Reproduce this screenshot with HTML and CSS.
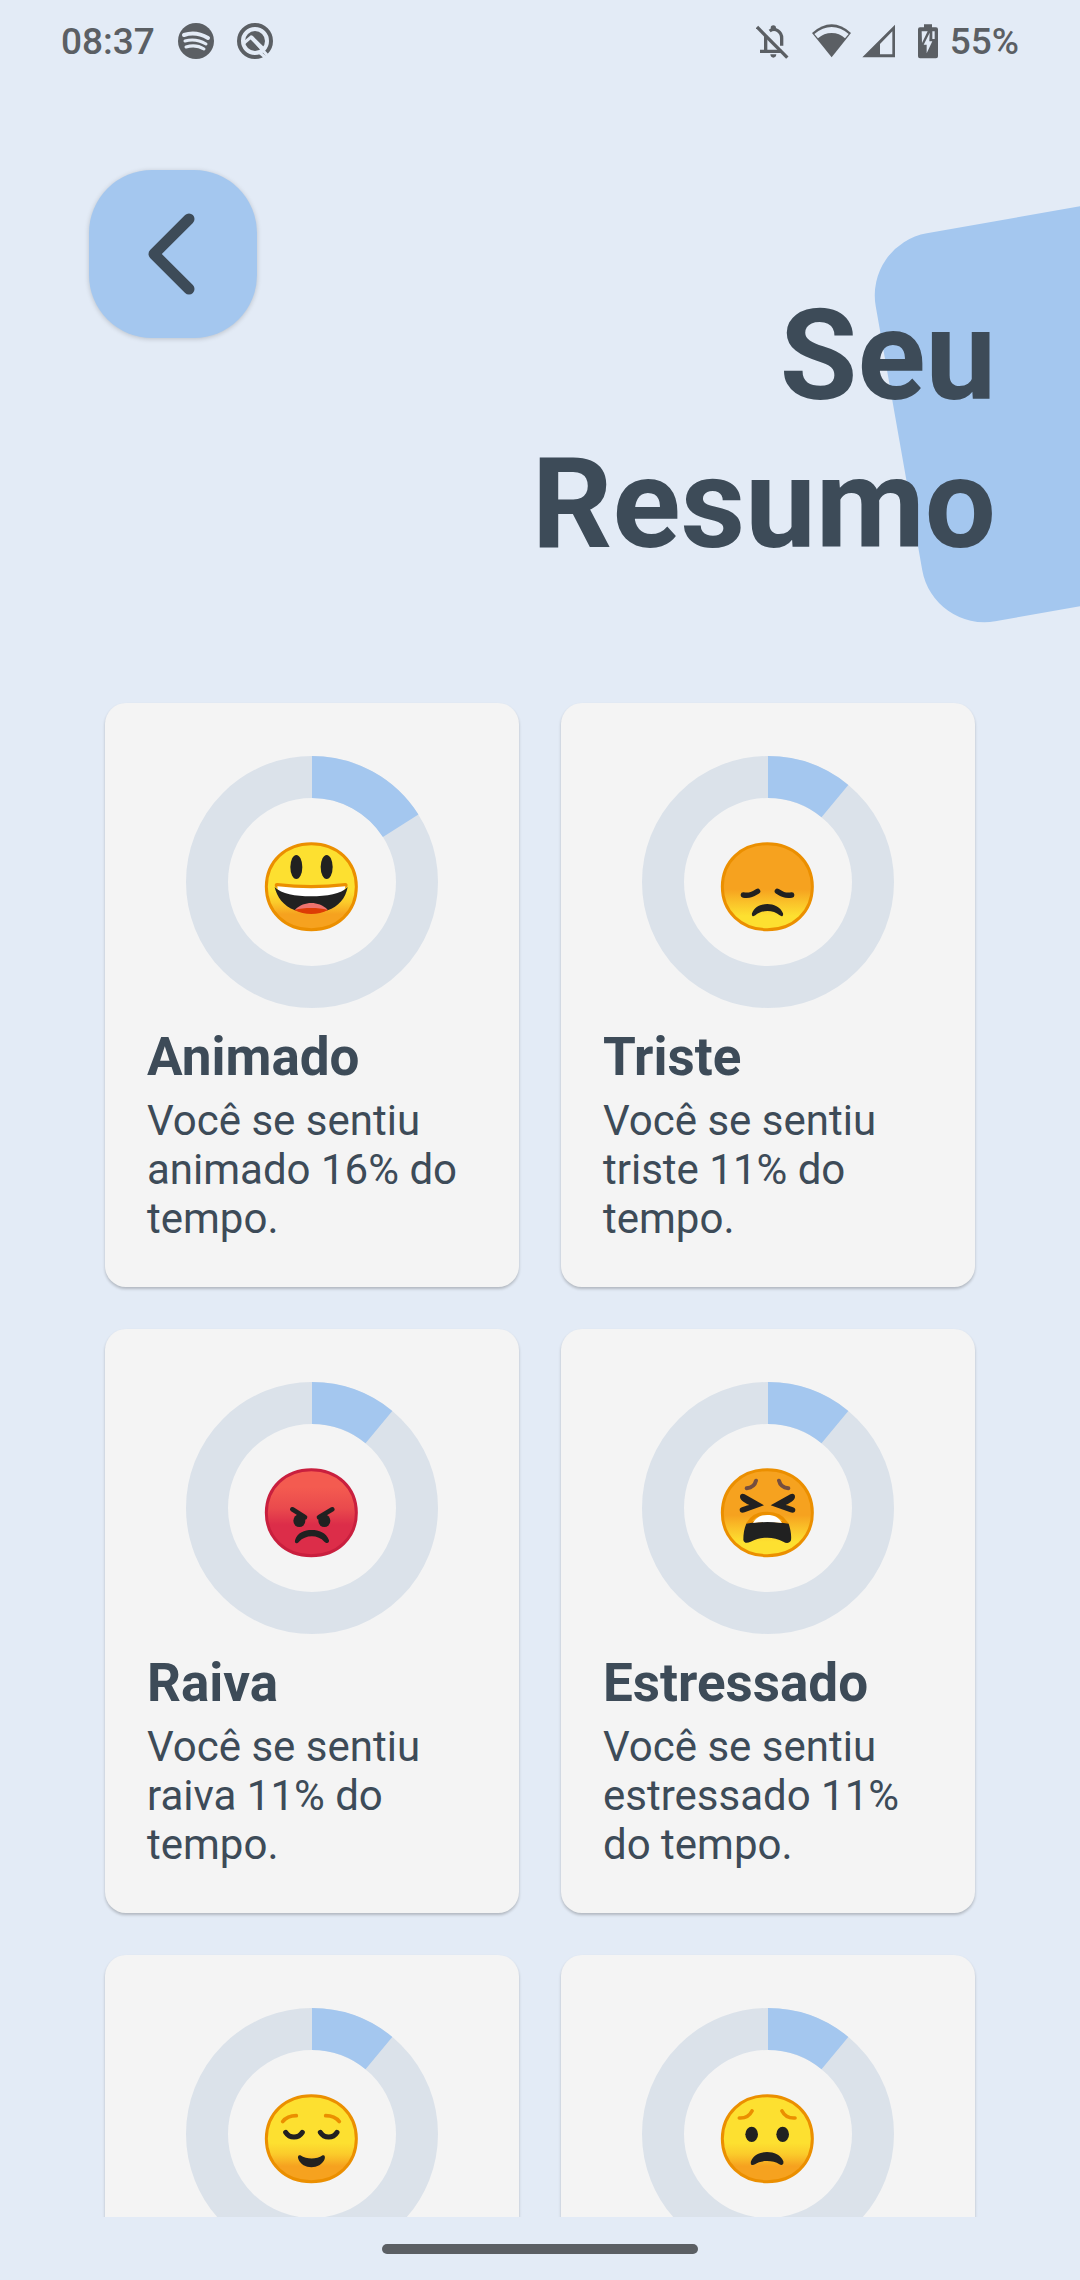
FILE: index.html
```html
<!DOCTYPE html>
<html lang="pt-BR">
<head>
<meta charset="utf-8">
<meta name="viewport" content="width=device-width, initial-scale=1">
<title>Seu Resumo</title>
<link rel="stylesheet" href="styles.css">
</head>
<body>
<svg class="defs" aria-hidden="true">
  <defs>
    <linearGradient id="warm" x1="0" y1="0" x2="0" y2="1">
      <stop offset="0.55" stop-color="#fde030"/>
      <stop offset="0.68" stop-color="#fbcb2b"/>
      <stop offset="0.82" stop-color="#f6a21f"/>
    </linearGradient>
    <linearGradient id="gloom" x1="0" y1="0" x2="0" y2="1">
      <stop offset="0.53" stop-color="#f6a21f"/>
      <stop offset="0.68" stop-color="#fac129"/>
      <stop offset="0.84" stop-color="#fde030"/>
    </linearGradient>
    <linearGradient id="rage" x1="0" y1="0" x2="0" y2="1">
      <stop offset="0.2" stop-color="#f45b50"/>
      <stop offset="0.45" stop-color="#ea4a4d"/>
      <stop offset="0.64" stop-color="#dc2d49"/>
    </linearGradient>
    <path id="face" d="M0-129C78-129 135-75 135 0 135 75 78 129 0 129-78 129-135 75-135 0-135-75-78-129 0-129Z"/>
  </defs>
</svg>

<div class="status">
  <div class="status-left">
    <span>08:37</span>
    <svg width="36" height="36" viewBox="0 0 36 36" aria-hidden="true">
      <circle cx="18" cy="18" r="18" fill="currentColor"/>
      <path class="cut" stroke-width="4" d="M6 12Q18 8 30 15"/>
      <path class="cut" stroke-width="3" d="M7 18Q18 15 28 21"/>
      <path class="cut" stroke-width="3" d="M8 24Q18 21 26 26"/>
    </svg>
    <svg width="36" height="36" viewBox="0 0 36 36" aria-hidden="true">
      <circle cx="18" cy="18" r="16" fill="none" stroke="currentColor" stroke-width="4"/>
      <circle cx="18" cy="18" r="10" fill="currentColor"/>
      <path d="M7 20L14 14L30 32" fill="none" stroke="#e3ebf6" stroke-width="3"/>
      <path d="M14 14L27 27" fill="none" stroke="#e3ebf6" stroke-width="4"/>
      <path d="M22 29L29 35" fill="none" stroke="#e3ebf6" stroke-width="3"/>
    </svg>
  </div>
  <div class="status-right">
    <svg width="33" height="35" viewBox="51 70 99 105" aria-hidden="true" fill="none" stroke="currentColor">
      <path stroke-width="10" d="M54 79L145 171"/>
      <path stroke-width="10" d="M80 105V152M63 152H128M92 91C110 78 128 95 128 112V135"/>
      <circle cx="103" cy="82" r="8" fill="currentColor" stroke="none"/>
      <path fill="currentColor" stroke="none" d="M94 161H112Q111 171 103 171T94 161Z"/>
    </svg>
    <div class="signals">
      <svg width="41" height="35" viewBox="213 68 123 105" aria-hidden="true">
        <path fill="currentColor" d="M275 168L216 95Q245 69 275 69T333 95Z"/>
        <path fill="#e3ebf6" d="M223 98Q248 77 275 77T326 98L315 111Q298 95 275 95T234 111Z"/>
      </svg>
      <svg width="34" height="35" viewBox="366 68 102 105" aria-hidden="true">
        <path fill="currentColor" fill-rule="evenodd" d="M367 168L465 70V168ZM420 128V159H457V90Z"/>
      </svg>
    </div>
    <div class="battery">
      <svg width="20" height="35" viewBox="537 68 60 105" aria-hidden="true">
        <path fill="currentColor" d="M555 69H579V78H591Q597 78 597 84V165Q597 171 591 171H543Q537 171 537 165V84Q537 78 543 78H555Z"/>
        <path fill="#e3ebf6" d="M548 90H566L549 125ZM580 90H587V113H580ZM572 94L554 130H563V156L580 120H571Z"/>
      </svg>
      <span>55%</span>
    </div>
  </div>
</div>

<main class="screen">
  <header class="header">
    <div class="tile"></div>
    <button class="back" type="button" aria-label="Voltar">
      <svg width="54" height="84" viewBox="0 0 54 84" aria-hidden="true">
        <path d="M43 7L8 42L43 77" fill="none" stroke="currentColor" stroke-width="11" stroke-linecap="round" stroke-linejoin="round"/>
      </svg>
    </button>
    <h1 class="heading">Seu<br>Resumo</h1>
  </header>

  <section class="cards">
    <article class="card">
      <svg class="ring" viewBox="0 0 252 252" role="img" aria-label="16%">
        <circle class="track" cx="126" cy="126" r="105"/>
        <circle class="value" cx="126" cy="126" r="105" pathLength="100" stroke-dasharray="16 100" transform="rotate(-90 126 126)"/>
        <svg x="69" y="74" width="115" height="115" viewBox="0 0 345 345">
          <use class="face warm" href="#face" x="169" y="170"/>
          <ellipse class="ink" cx="124" cy="111" rx="18" ry="36"/>
          <ellipse class="ink" cx="215" cy="111" rx="18" ry="36"/>
          <path class="brow" stroke-width="14" d="M66 166Q168 178 271 166"/>
          <path fill="#fff" d="M67 169Q168 181 271 169C266 205 225 203 168 203S70 205 67 169Z"/>
          <path class="ink" d="M59 171C80 192 120 199 168 199S258 192 278 171C272 205 250 230 218 241H120C85 228 65 200 59 171Z"/>
          <path fill="#ee736e" d="M120 239C134 225 152 219 169 219S204 225 218 239C190 252 148 252 120 239Z"/>
          <path fill="#dd3c05" d="M118 240C150 232 188 232 219 240C190 256 148 256 118 240Z"/>
        </svg>
      </svg>
      <h2 class="name">Animado</h2>
      <p class="text">Você se sentiu animado 16% do tempo.</p>
    </article>

    <article class="card">
      <svg class="ring" viewBox="0 0 252 252" role="img" aria-label="11%">
        <circle class="track" cx="126" cy="126" r="105"/>
        <circle class="value" cx="126" cy="126" r="105" pathLength="100" stroke-dasharray="11 100" transform="rotate(-90 126 126)"/>
        <svg x="69" y="74" width="115" height="115" viewBox="3 0 345 345">
          <use class="face gloom" href="#face" x="172" y="170"/>
          <path class="line" stroke-width="16" d="M100 195C120 198 130 192 143 184M202 184C214 192 224 198 245 195"/>
          <path class="ink" d="M126 250C133 230 153 222 172 222S211 230 219 250C221 260 214 260 209 256C190 239 155 239 136 256C131 260 124 260 126 250Z"/>
        </svg>
      </svg>
      <h2 class="name">Triste</h2>
      <p class="text">Você se sentiu triste 11% do tempo.</p>
    </article>

    <article class="card">
      <svg class="ring" viewBox="0 0 252 252" role="img" aria-label="11%">
        <circle class="track" cx="126" cy="126" r="105"/>
        <circle class="value" cx="126" cy="126" r="105" pathLength="100" stroke-dasharray="11 100" transform="rotate(-90 126 126)"/>
        <svg x="69" y="74" width="115" height="115" viewBox="0 3 345 345">
          <use class="face rage" href="#face" x="169" y="173"/>
          <path class="line" stroke-width="14" d="M112 163L150 187M232 163L192 187"/>
          <ellipse class="ink" cx="133" cy="197" rx="18" ry="19"/>
          <ellipse class="ink" cx="208" cy="197" rx="18" ry="19"/>
          <path class="ink" d="M120 256C128 232 148 225 170 225S213 232 222 256C223 266 214 266 208 260C190 238 151 238 132 260C126 267 118 266 120 256Z"/>
        </svg>
      </svg>
      <h2 class="name">Raiva</h2>
      <p class="text">Você se sentiu raiva 11% do tempo.</p>
    </article>

    <article class="card">
      <svg class="ring" viewBox="0 0 252 252" role="img" aria-label="11%">
        <circle class="track" cx="126" cy="126" r="105"/>
        <circle class="value" cx="126" cy="126" r="105" pathLength="100" stroke-dasharray="11 100" transform="rotate(-90 126 126)"/>
        <svg x="69" y="74" width="115" height="115" viewBox="3 3 345 345">
          <use class="face gloom" href="#face" x="172" y="173"/>
          <path fill="none" stroke="#754e3f" stroke-width="12" stroke-linecap="round" d="M110 100C125 98 135 90 138 77M207 77C210 90 220 98 235 100"/>
          <path class="ink" d="M90 125C90 116 98 115 104 118L162 151L104 172C94 175 89 171 89 164C89 158 98 155 118 150C98 140 90 133 90 125Z"/>
          <path class="ink" d="M255 125C255 116 247 115 241 118L182 151L241 172C251 175 256 171 256 164C256 158 247 155 227 150C247 140 255 133 255 125Z"/>
          <path class="brow" stroke-width="10" d="M116 203C130 180 150 175 172 175S214 180 228 203Z"/>
          <path class="ink" d="M109 206C145 199 198 199 236 206C241 222 245 238 243 256C238 266 228 265 220 260C190 244 155 244 122 260C110 266 102 264 100 255C100 235 103 220 109 206Z"/>
          <path fill="#fff" d="M129 204C138 187 152 180 172 180S206 187 216 204Q172 198 129 204Z"/>
        </svg>
      </svg>
      <h2 class="name">Estressado</h2>
      <p class="text">Você se sentiu estressado 11% do tempo.</p>
    </article>

    <article class="card">
      <svg class="ring" viewBox="0 0 252 252" role="img" aria-label="11%">
        <circle class="track" cx="126" cy="126" r="105"/>
        <circle class="value" cx="126" cy="126" r="105" pathLength="100" stroke-dasharray="11 100" transform="rotate(-90 126 126)"/>
        <svg x="69" y="74" width="115" height="115" viewBox="0 6 345 345">
          <use class="face warm" href="#face" x="169" y="176"/>
          <path class="brow" stroke-width="11" d="M83 125C93 112 106 107 124 107M212 107C230 107 243 112 253 125"/>
          <path class="line" stroke-width="15" d="M92 157C104 176 130 176 142 157M196 157C208 176 234 176 246 157"/>
          <path class="ink" d="M136 226C156 239 184 239 203 226C209 224 211 230 209 237C196 270 142 270 130 237C127 230 130 224 136 226Z"/>
        </svg>
      </svg>
    </article>

    <article class="card">
      <svg class="ring" viewBox="0 0 252 252" role="img" aria-label="11%">
        <circle class="track" cx="126" cy="126" r="105"/>
        <circle class="value" cx="126" cy="126" r="105" pathLength="100" stroke-dasharray="11 100" transform="rotate(-90 126 126)"/>
        <svg x="69" y="74" width="115" height="115" viewBox="3 6 345 345">
          <use class="face warm" href="#face" x="172" y="176"/>
          <path class="brow" stroke-width="11" d="M88 114C106 115 119 107 126 93M216 93C223 107 238 115 255 114"/>
          <ellipse class="ink" cx="125" cy="163" rx="19" ry="23"/>
          <ellipse class="ink" cx="218" cy="163" rx="19" ry="23"/>
          <path class="ink" d="M123 244C130 225 150 216 171 216S213 225 220 244C222 256 214 256 208 253C190 240 152 240 135 253C128 257 120 256 123 244Z"/>
        </svg>
      </svg>
    </article>
  </section>
</main>

<div class="nav"><div class="pill"></div></div>
</body>
</html>
```

FILE: styles.css
```css
* {
  box-sizing: border-box;
}

body {
  margin: 0;
  height: 100vh;
  display: flex;
  flex-direction: column;
  background: #e3ebf6;
  color: #3d4b58;
  font-family: Roboto, "Noto Sans", sans-serif;
}

svg {
  display: block;
  flex: none;
}

.defs {
  position: absolute;
  width: 0;
  height: 0;
}

/* System bars */
.status {
  display: flex;
  justify-content: space-between;
  align-items: center;
  height: 82px;
  flex: none;
  padding: 0 61px;
  color: #5b5f64;
  font-size: 37px;
  font-weight: 500;
  line-height: 44px;
}

.status span {
  padding-top: 2px;
}

.status-left,
.status-right,
.signals,
.battery {
  display: flex;
  align-items: center;
}

.status-left {
  gap: 23px;
}

.status-right {
  gap: 22px;
}

.signals {
  gap: 10px;
}

.battery {
  gap: 12px;
}

.cut {
  fill: none;
  stroke: #e3ebf6;
  stroke-linecap: round;
}

.nav {
  flex: none;
  display: flex;
  justify-content: center;
  align-items: center;
  height: 63px;
}

.pill {
  width: 316px;
  height: 10px;
  border-radius: 5px;
  background: #5b5f64;
}

/* Scrolling content */
.screen {
  flex: 1;
  min-height: 0;
  overflow: hidden auto;
  scrollbar-width: none;
}

.header {
  position: relative;
  display: flex;
  justify-content: space-between;
  align-items: flex-start;
  padding: 88px 84px 125px 89px;
}

.tile {
  position: absolute;
  top: 125px;
  right: -210px;
  width: 394px;
  height: 394px;
  border-radius: 63px;
  background: #a4c7ef;
  transform: rotate(-10deg);
}

.back {
  display: flex;
  justify-content: center;
  align-items: center;
  width: 168px;
  height: 168px;
  padding: 0;
  border: 0;
  border-radius: 63px;
  background: #a4c7ef;
  box-shadow: 0 1px 5px rgba(0, 0, 0, 0.18);
  color: #3d4b58;
}

.heading {
  position: relative;
  margin: 112px 0 0;
  font-size: 126px;
  font-weight: 700;
  line-height: 148px;
  text-align: right;
}

.cards {
  display: grid;
  grid-template-columns: 1fr 1fr;
  gap: 42px;
  padding: 0 105px 42px;
}

.card {
  min-height: 584px;
  padding: 53px 42px 42px;
  border-radius: 21px;
  background: #f4f4f4;
  box-shadow: 0 2px 3px rgba(0, 0, 0, 0.22);
}

.ring {
  width: 252px;
  height: 252px;
  margin: 0 auto 18px;
}

.name {
  margin: 0 0 8px;
  font-size: 53px;
  font-weight: 700;
  line-height: 62px;
}

.text {
  margin: 0;
  font-size: 42px;
  line-height: 49px;
}

.track,
.value {
  fill: none;
  stroke: #dbe2ea;
  stroke-width: 42px;
}

.value {
  stroke: #a4c7ef;
}

/* Faces */
.face {
  stroke: #eb8f00;
  stroke-width: 9px;
}

.warm {
  fill: url(#warm);
}

.gloom {
  fill: url(#gloom);
}

.rage {
  fill: url(#rage);
  stroke: #c91f3e;
}

.ink {
  fill: #212121;
}

.line {
  fill: none;
  stroke: #212121;
  stroke-linecap: round;
}

.brow {
  fill: none;
  stroke: #eb8f00;
  stroke-linecap: round;
}
```
